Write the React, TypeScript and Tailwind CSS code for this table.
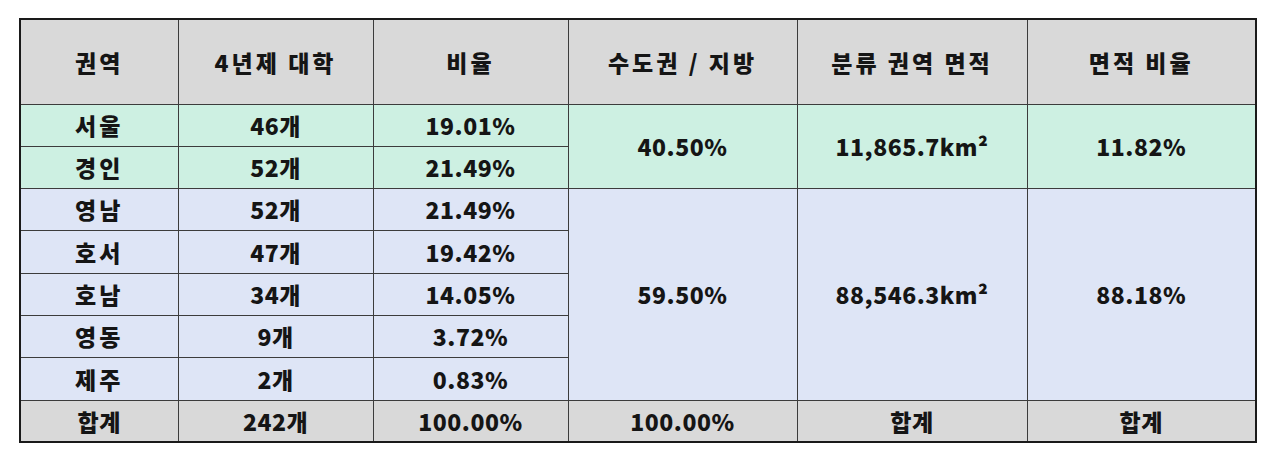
const FONT = '"Noto Sans CJK KR", "Noto Sans", sans-serif'

const upper = [
  { name: '서울', count: '46개', ratio: '19.01%' },
  { name: '경인', count: '52개', ratio: '21.49%' },
]

const lower = [
  { name: '영남', count: '52개', ratio: '21.49%' },
  { name: '호서', count: '47개', ratio: '19.42%' },
  { name: '호남', count: '34개', ratio: '14.05%' },
  { name: '영동', count: '9개', ratio: '3.72%' },
  { name: '제주', count: '2개', ratio: '0.83%' },
]

const cell = 'border border-[#3c3c3c] text-center align-middle p-0 font-black'

export default function App() {
  return (
    <div className="min-h-screen bg-white pl-[19px] pt-[18px]" style={{ fontFamily: FONT }}>
      <table className="border-collapse border-2 border-[#1a1a1a] text-[23px] font-black text-[#151515] table-fixed w-[1236px] tracking-[0.5px]">
        <colgroup>
          <col className="w-[158px]" />
          <col className="w-[195px]" />
          <col className="w-[195px]" />
          <col className="w-[229px]" />
          <col className="w-[230px]" />
          <col className="w-[229px]" />
        </colgroup>
        <thead>
          <tr className="h-[85px] bg-[#d9d9d9] tracking-[3px]">
            <th className={cell}>권역</th>
            <th className={cell}>4년제 대학</th>
            <th className={cell}>비율</th>
            <th className={cell}>수도권 / 지방</th>
            <th className={cell}>분류 권역 면적</th>
            <th className={cell}>면적 비율</th>
          </tr>
        </thead>
        <tbody>
          {upper.map((r, i) => (
            <tr key={r.name} className="h-[42.3px] bg-[#cdf0e2]">
              <td className={`${cell} tracking-[3px]`}>{r.name}</td>
              <td className={cell}>{r.count}</td>
              <td className={cell}>{r.ratio}</td>
              {i === 0 && (
                <>
                  <td rowSpan={2} className={cell}>40.50%</td>
                  <td rowSpan={2} className={cell}>11,865.7km²</td>
                  <td rowSpan={2} className={cell}>11.82%</td>
                </>
              )}
            </tr>
          ))}
          {lower.map((r, i) => (
            <tr key={r.name} className="h-[42.3px] bg-[#dee5f6]">
              <td className={`${cell} tracking-[3px]`}>{r.name}</td>
              <td className={cell}>{r.count}</td>
              <td className={cell}>{r.ratio}</td>
              {i === 0 && (
                <>
                  <td rowSpan={5} className={cell}>59.50%</td>
                  <td rowSpan={5} className={cell}>88,546.3km²</td>
                  <td rowSpan={5} className={cell}>88.18%</td>
                </>
              )}
            </tr>
          ))}
          <tr className="h-[42.3px] bg-[#d9d9d9]">
            <td className={cell}>합계</td>
            <td className={cell}>242개</td>
            <td className={cell}>100.00%</td>
            <td className={cell}>100.00%</td>
            <td className={cell}>합계</td>
            <td className={cell}>합계</td>
          </tr>
        </tbody>
      </table>
    </div>
  )
}
